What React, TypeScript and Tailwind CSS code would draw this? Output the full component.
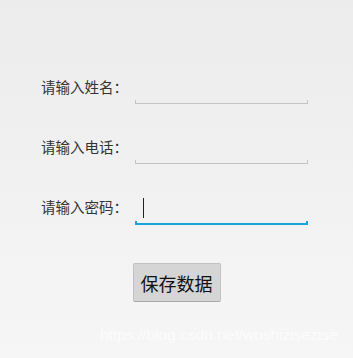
import React from 'react';

const fields = [
  { label: '请输入姓名：', active: false },
  { label: '请输入电话：', active: false },
  { label: '请输入密码：', active: true },
];

const Field: React.FC<{ label: string; active: boolean }> = ({ label, active }) => (
  <div className="flex h-[34px] items-center">
    <span className="w-[94px] pl-[41px] box-content text-[14.5px] leading-none text-[#333333] whitespace-nowrap">
      {label}
    </span>
    <div className="relative h-full w-[173px]">
      {active && <span className="absolute left-[8px] top-[8px] h-[20px] w-px bg-[#222222]" />}
      {/* underline with little end ticks, holo style */}
      <div
        className={
          active
            ? 'absolute bottom-[-1px] left-0 right-0 h-[4px] border-x-2 border-b-2 border-[#17a4d8]'
            : 'absolute bottom-0 left-0 right-0 h-[4px] border-x border-b border-[#c4c4c4]'
        }
      />
    </div>
  </div>
);

const App: React.FC = () => {
  return (
    <div
      className="relative h-[358px] w-[353px] overflow-hidden bg-gradient-to-b from-[#ececec] to-[#f6f6f6]"
      style={{ fontFamily: '"Noto Sans CJK SC", "Noto Sans", sans-serif' }}
    >
      <div className="flex flex-col gap-[26px] pt-[70px]">
        {fields.map((f) => (
          <Field key={f.label} label={f.label} active={f.active} />
        ))}
      </div>

      <div className="mt-[39px] flex justify-center">
        <button className="h-[39px] w-[88px] rounded-[2px] border border-[#c2c2c2] border-b-[#a9a9a9] bg-[#d5d5d5] text-[18px] leading-none text-[#111111]">
          保存数据
        </button>
      </div>

      {/* csdn watermark */}
      <div
        className="absolute left-[100px] top-[323px] text-[15.5px] text-white/70 whitespace-nowrap"
        style={{ fontFamily: '"Liberation Sans", Arial, sans-serif' }}
      >
        https://blog.csdn.net/woshizisezise
      </div>
    </div>
  );
};

export default App;
